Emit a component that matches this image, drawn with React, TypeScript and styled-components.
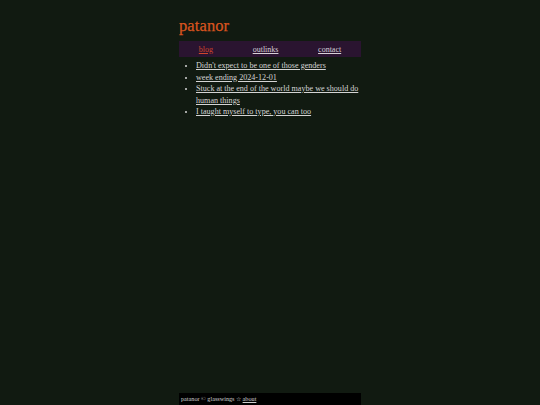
import React from "react";
import styled, { createGlobalStyle } from "styled-components";

const Global = createGlobalStyle`
  html, body { margin: 0; padding: 0; background: #111a11; }
  body { font-family: "Liberation Serif", "DejaVu Serif", serif; color: #d6d6d6; }
`;

const Page = styled.div`
  width: 182px;
  margin: 0 auto;
  min-height: 100vh;
  display: flex;
  flex-direction: column;
`;

const Title = styled.h1`
  margin: 16px 0 0 0;
  font-size: 16.5px;
  line-height: 20px;
  font-weight: normal;
  color: #d8541f;
  letter-spacing: 0.1px;
  -webkit-text-stroke: 0.25px #d8541f;
`;

const Nav = styled.nav`
  margin-top: 5px;
  height: 16px;
  background: #2a1430;
  display: flex;
  justify-content: space-around;
  align-items: center;
  font-size: 8px;
`;

const NavLink = styled.a<{ $active?: boolean }>`
  color: ${(p) => (p.$active ? "#d0452c" : "#d8d0d8")};
  text-decoration: underline;
`;

const List = styled.ul`
  margin: 3px 0 0 0;
  padding-left: 17px;
  font-size: 8.1px;
  line-height: 11.5px;
  list-style: disc;
`;

const Item = styled.li`
  & a { color: #d4d4d4; text-decoration: underline; }
`;

const Footer = styled.footer`
  margin-top: auto;
  height: 12px;
  background: #000;
  font-size: 6.2px;
  line-height: 12px;
  padding-left: 2px;
  color: #cfcfcf;
  & a { color: #cfcfcf; text-decoration: underline; }
`;

const posts = [
  "Didn't expect to be one of those genders",
  "week ending 2024-12-01",
  "Stuck at the end of the world maybe we should do human things",
  "I taught myself to type, you can too",
];

export default function App() {
  return (
    <>
      <Global />
      <Page>
        <Title>patanor</Title>
        <Nav>
          <NavLink href="#" $active>blog</NavLink>
          <NavLink href="#">outlinks</NavLink>
          <NavLink href="#">contact</NavLink>
        </Nav>
        <List>
          {posts.map((p) => (
            <Item key={p}>
              <a href="#">{p}</a>
            </Item>
          ))}
        </List>
        <Footer>
          patanor © glasswings ☆ <a href="#">about</a>
        </Footer>
      </Page>
    </>
  );
}
